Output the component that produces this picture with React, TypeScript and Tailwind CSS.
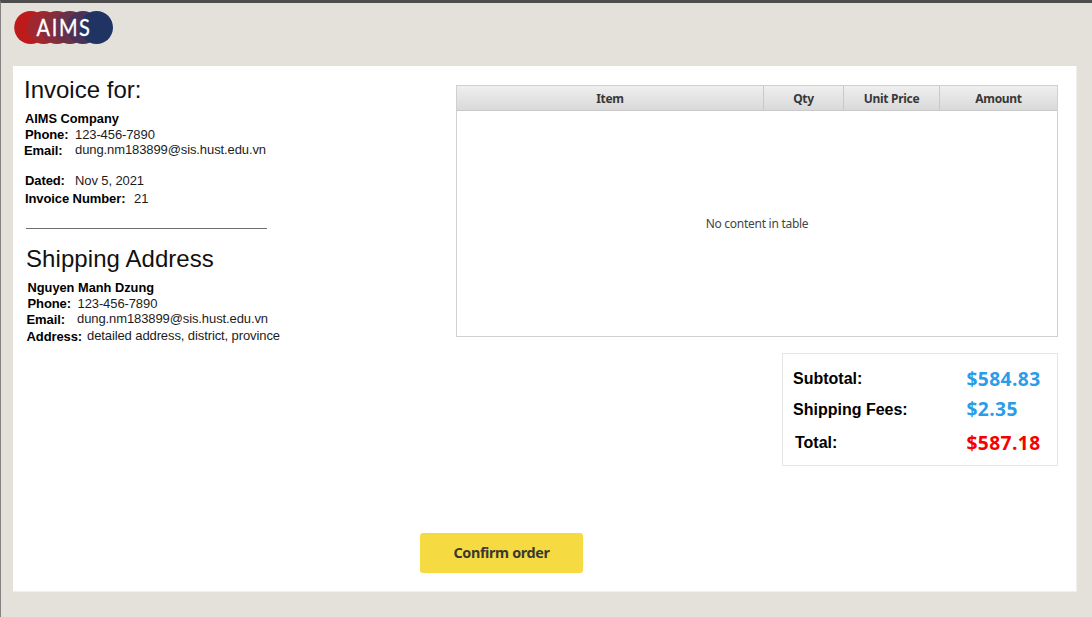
import type { ReactNode } from "react";

type FieldProps = { label: string; value: string; className: string; labelClass: string; valueClass?: string };

function Field({ label, value, className, labelClass, valueClass = "" }: FieldProps) {
  return (
    <div className={`flex items-center whitespace-nowrap text-[13px] tracking-[-0.1px] ${className}`}>
      <span className={`shrink-0 font-bold text-black ${labelClass}`}>{label}</span>
      <span className={`text-[#1c1c1c] ${valueClass}`}>{value}</span>
    </div>
  );
}

function Logo() {
  return (
    <svg width="100" height="34" viewBox="0 0 100 34" role="img" aria-label="AIMS">
      <circle cx="16.7" cy="16.5" r="16.5" fill="#bd1a1b" />
      <circle cx="29.7" cy="16.5" r="16.5" fill="#a0272f" />
      <circle cx="43" cy="16.5" r="16.5" fill="#852d3b" />
      <circle cx="56" cy="16.5" r="16.5" fill="#693149" />
      <circle cx="69" cy="16.5" r="16.5" fill="#483258" />
      <circle cx="82.5" cy="16.5" r="16.5" fill="#203463" />
      <text transform="scale(0.87 1)" x="26 43.3 51.7 74.7" y="24.7" fontFamily="Lato, sans-serif" fontSize="23" fill="#fff" stroke="#fff" strokeWidth="0.3">
        AIMS
      </text>
    </svg>
  );
}

function HeadCell({ children, className = "" }: { children: ReactNode; className?: string }) {
  return (
    <div className={`flex h-full items-center justify-center border-[#c9c9c9] pt-px ${className}`}>{children}</div>
  );
}

type TotalProps = { label: string; amount: string; className: string; labelClass?: string; color: string };

function TotalRow({ label, amount, className, labelClass = "", color }: TotalProps) {
  return (
    <div className={`flex items-center whitespace-nowrap ${className}`}>
      <span className={`w-[173.5px] shrink-0 text-[16px] font-bold text-black ${labelClass}`}>{label}</span>
      <span className={`font-['Open_Sans','Noto_Sans',sans-serif] text-[19.2px] font-bold tracking-[0.4px] ${color}`}>{amount}</span>
    </div>
  );
}

export default function App() {
  return (
    <div className="flex h-[617px] w-[1092px] flex-col overflow-hidden border-t-3 border-l border-t-[#4e4d4d] border-l-[#858381] bg-[#e4e1da] font-['Liberation_Sans',Arial,sans-serif]">
      <header className="h-[63px] shrink-0 pt-[8px] pl-[13px]">
        <Logo />
      </header>
      <main className="ml-[12px] flex h-[526px] w-[1064px] shrink-0 flex-col border-r border-b border-[#f1efec] bg-white">
        <div className="flex h-[467px]">
          <section className="w-[443px] shrink-0 pt-[12px] pl-[12px]">
            <h1 className="h-[24px] -ml-px text-[24px] leading-[24px] whitespace-nowrap text-[#111]">Invoice for:</h1>
            <div className="mt-[9px] h-[15px] text-[12.8px] leading-[16px] font-bold text-black">AIMS Company</div>
            <Field label="Phone:" value="123-456-7890" className="h-[17px]" labelClass="w-[50px]" />
            <Field label="Email:" value="dung.nm183899@sis.hust.edu.vn" className="-ml-px h-[16px]" labelClass="w-[51px]" valueClass="pb-[2px]" />
            <Field label="Dated:" value="Nov 5, 2021" className="mt-[13px] h-[17px]" labelClass="w-[50px]" />
            <Field label="Invoice Number:" value="21" className="h-[19px]" labelClass="w-[109px]" />
            <hr className="mt-[20px] ml-[1px] w-[241px] border-t border-[#6f6f6f]" />
            <h2 className="mt-[18px] ml-[1px] h-[24px] text-[24px] leading-[24px] tracking-[0.07px] whitespace-nowrap text-[#111]">Shipping Address</h2>
            <div className="mt-[9px] ml-[2.5px] h-[16px] text-[12.8px] leading-[16px] font-bold text-black">Nguyen Manh Dzung</div>
            <Field label="Phone:" value="123-456-7890" className="ml-[2.5px] h-[16px]" labelClass="w-[50px]" />
            <Field label="Email:" value="dung.nm183899@sis.hust.edu.vn" className="ml-[1.5px] h-[16px]" labelClass="w-[50.5px]" valueClass="pb-[2px]" />
            <Field label="Address:" value="detailed address, district, province" className="ml-[1.5px] h-[17px]" labelClass="w-[60.5px]" valueClass="pb-px" />
          </section>
          <section className="flex w-[602px] shrink-0 flex-col pt-[19px]">
            <div className="flex h-[252px] flex-col border border-[#d0d0d0] font-['Noto_Sans',sans-serif]">
              <div className="flex h-[25px] shrink-0 border-b border-[#c9c9c9] bg-linear-to-b from-[#efefef] to-[#d9d9d9] text-[12px] font-bold tracking-[-0.3px] text-[#383838]">
                <HeadCell className="w-[307px] border-r">Item</HeadCell>
                <HeadCell className="w-[80px] border-r">Qty</HeadCell>
                <HeadCell className="w-[96px] border-r">Unit Price</HeadCell>
                <HeadCell className="flex-1">Amount</HeadCell>
              </div>
              <div className="flex flex-1 items-center justify-center text-[12px] tracking-[-0.27px] text-[#444]">No content in table</div>
            </div>
            <div className="mt-[16px] ml-auto h-[113px] w-[276px] border border-[#e6e6e6] pt-[10px] pl-[10px]">
              <TotalRow label="Subtotal:" amount="$584.83" className="h-[30px]" color="text-[#2a9ce8]" />
              <TotalRow label="Shipping Fees:" amount="$2.35" className="h-[31px]" color="text-[#2a9ce8]" />
              <TotalRow label="Total:" amount="$587.18" className="h-[36px]" labelClass="pl-[2px]" color="text-[#f90000]" />
            </div>
          </section>
        </div>
        <button className="ml-[407px] h-[40px] w-[163px] rounded-[3px] bg-[#f6da42] font-['Noto_Sans',sans-serif] text-[14.4px] font-bold tracking-[-0.36px] text-[#3a3830]">
          Confirm order
        </button>
      </main>
    </div>
  );
}
